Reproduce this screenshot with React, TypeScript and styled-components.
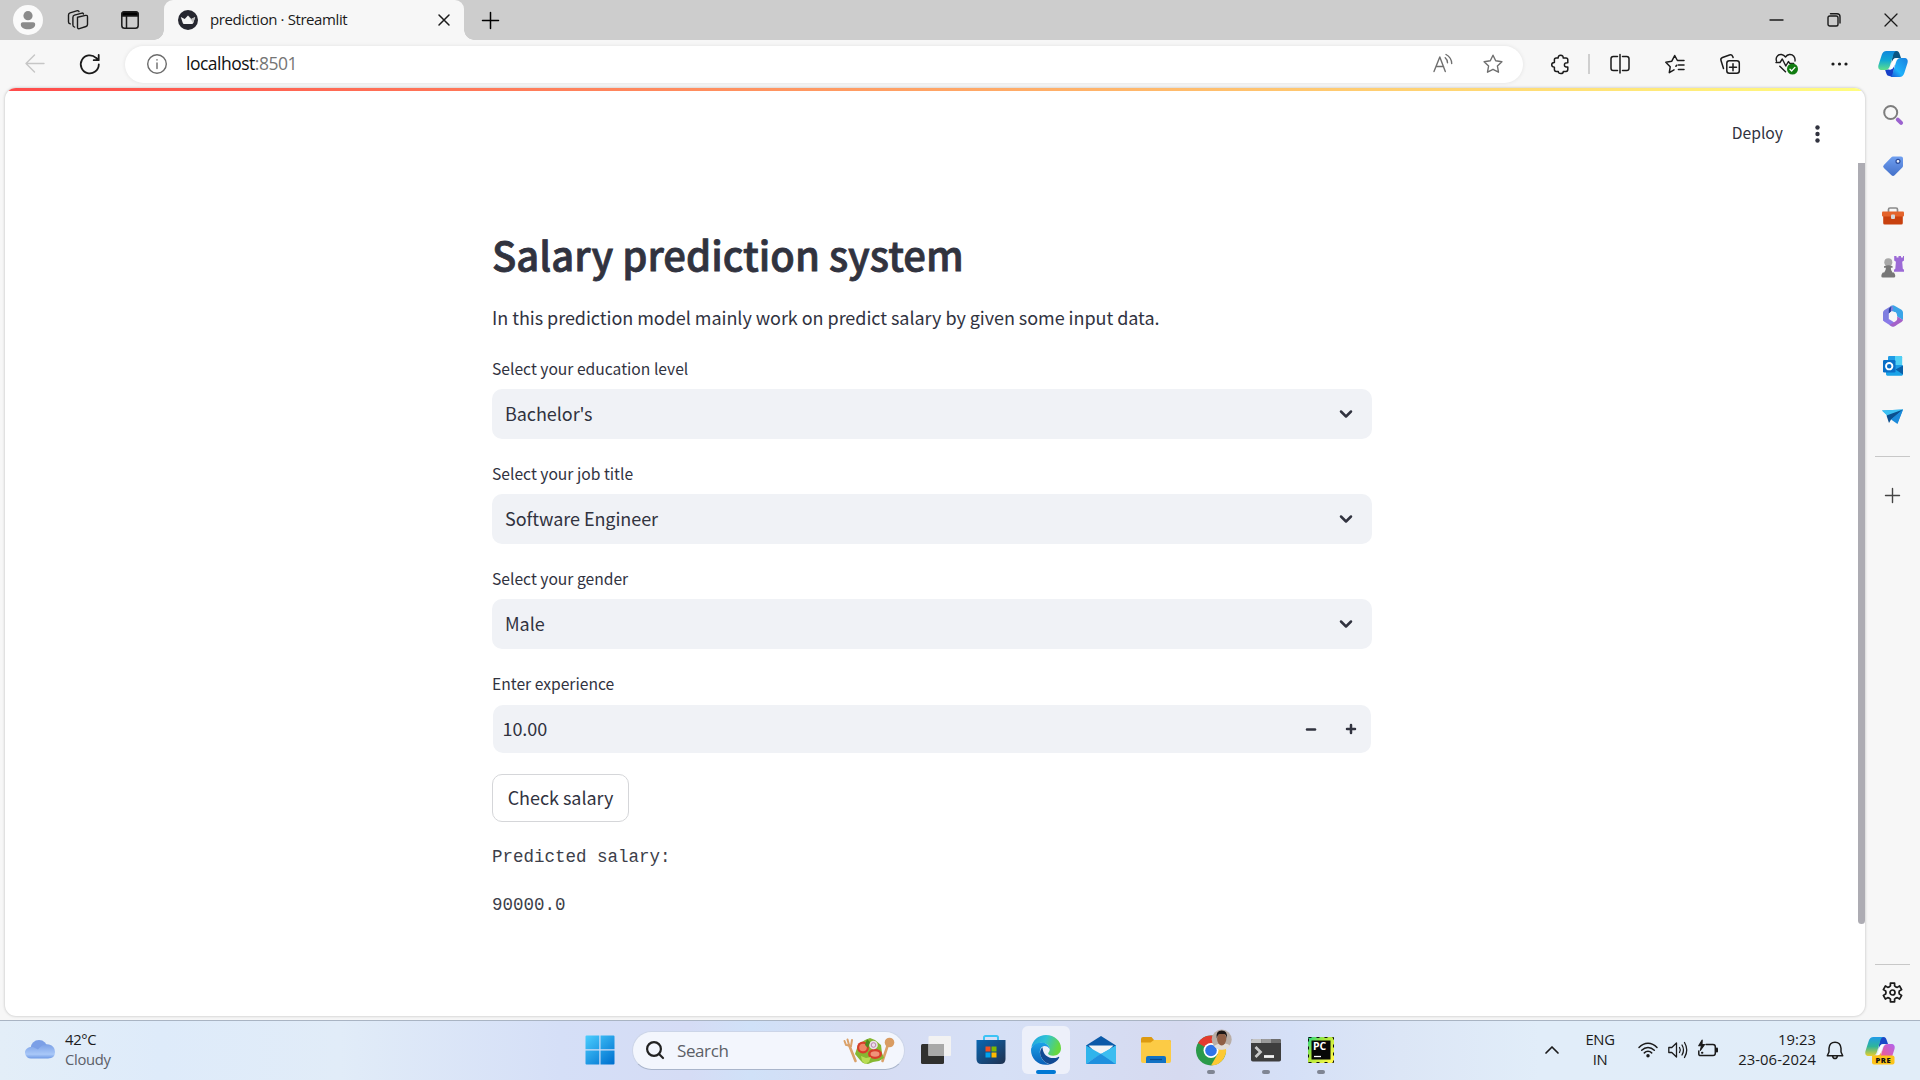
import React from "react";
import styled, { createGlobalStyle } from "styled-components";

const ui = `"Open Sans", "Noto Sans", sans-serif`;
const source = `"Noto Sans CJK SC", "Noto Sans", sans-serif`;

const Global = createGlobalStyle`
  * { box-sizing: border-box; }
  html, body { margin: 0; padding: 0; overflow: hidden; }
  svg { display: block; overflow: visible; flex: none; }
`;

const Screen = styled.div`
  width: 1920px;
  height: 1080px;
  display: flex;
  flex-direction: column;
  background: #f7f7f7;
  font-family: ${ui};
  overflow: hidden;
`;

/* ---------- tab strip ---------- */
const TabStrip = styled.header`
  height: 40px;
  flex: none;
  display: flex;
  background: #cdcdcd;
`;
const Slot = styled.div<{ $w: number; $h?: number; $end?: boolean }>`
  width: ${(p) => p.$w}px;
  height: ${(p) => (p.$h ? `${p.$h}px` : "100%")};
  flex: none;
  display: flex;
  align-items: center;
  justify-content: ${(p) => (p.$end ? "flex-end" : "center")};
`;
const WindowControls = styled.div`
  display: flex;
  padding: 0 1px 1px 0;
`;
const Tab = styled.div`
  width: 300px;
  height: 40px;
  margin-left: 3px;
  padding: 0 10px 0 14px;
  display: flex;
  align-items: center;
  background: #f7f7f7;
  border-radius: 9px 9px 0 0;
  position: relative;
  &::before,
  &::after {
    content: "";
    position: absolute;
    bottom: 0;
    width: 10px;
    height: 10px;
  }
  &::before {
    left: -10px;
    background: radial-gradient(circle at 0 0, transparent 9.5px, #f7f7f7 10px);
  }
  &::after {
    right: -10px;
    background: radial-gradient(circle at 100% 0, transparent 9.5px, #f7f7f7 10px);
  }
`;
const TabTitle = styled.span`
  margin-left: 12px;
  padding-bottom: 2px;
  flex: 1;
  font-size: 15px;
  line-height: 20px;
  letter-spacing: -0.41px;
  color: #1b1b1b;
  white-space: nowrap;
`;
const Spacer = styled.div`
  flex: 1;
`;

/* ---------- toolbar ---------- */
const Toolbar = styled.div`
  height: 48px;
  flex: none;
  display: flex;
  align-items: center;
  background: #f7f7f7;
`;
const AddressBar = styled.div`
  width: 1398px;
  height: 37px;
  margin: 0 10px 0 15px;
  padding: 0 3px 0 22px;
  display: flex;
  align-items: center;
  background: #fff;
  border-radius: 19px;
  box-shadow: 0 0 4px rgba(0, 0, 0, 0.09);
`;
const Address = styled.span`
  margin-left: 19px;
  padding-bottom: 2px;
  font-size: 17.5px;
  line-height: 24px;
  letter-spacing: -0.5px;
  color: #111;
`;
const Port = styled.span`
  color: #757575;
`;
const ToolDivider = styled.div`
  width: 2px;
  height: 20px;
  background: #cfcfcf;
`;

/* ---------- body ---------- */
const Body = styled.div`
  height: 932px;
  flex: none;
  display: flex;
`;
const Page = styled.main`
  width: 1860px;
  height: 928px;
  margin-left: 5px;
  flex: none;
  display: flex;
  flex-direction: column;
  background: #fff;
  border-radius: 11px;
  overflow: hidden;
  box-shadow: 0 0 3px rgba(0, 0, 0, 0.25);
`;
const Decoration = styled.div`
  height: 3px;
  flex: none;
  background: linear-gradient(90deg, #ff4b4b, #fffd80);
`;
const AppHeader = styled.div`
  height: 72px;
  flex: none;
  padding: 14px 45px 0 0;
  display: flex;
  justify-content: flex-end;
  align-items: center;
  gap: 32px;
`;
const Deploy = styled.span`
  font: 400 15.7px/24px ${source};
  color: #31333f;
  margin-top: -2px;
`;
const Scroller = styled.div`
  flex: 1;
  display: flex;
  justify-content: space-between;
`;
const ScrollThumb = styled.div`
  width: 7px;
  height: 761px;
  background: #adacb3;
  border-radius: 0 0 4px 4px;
`;
const Block = styled.section`
  width: 880px;
  margin-left: 487px;
  padding-top: 67px;
  color: #31333f;
  font-family: ${source};
`;
const Title = styled.h1`
  margin: 0;
  height: 48px;
  font-size: 40px;
  line-height: 48px;
  font-weight: 500;
  -webkit-text-stroke: 0.8px #31333f;
  white-space: nowrap;
`;
const Intro = styled.p`
  margin: 24px 0 0;
  height: 30px;
  font-size: 18px;
  line-height: 30px;
  letter-spacing: -0.045px;
  white-space: nowrap;
`;
const Field = styled.div<{ $top: number }>`
  margin-top: ${(p) => p.$top}px;
`;
const Label = styled.div`
  height: 20px;
  margin-bottom: 10px;
  font-size: 15.65px;
  line-height: 20px;
`;
const Select = styled.div`
  height: 50px;
  padding: 0 16px 0 13px;
  display: flex;
  align-items: center;
  justify-content: space-between;
  background: #f0f2f6;
  border-radius: 10px;
  font-size: 18px;
  letter-spacing: -0.06px;
`;
const Value = styled.span`
  padding-bottom: 2px;
`;
const NumberBox = styled(Select)`
  height: 48px;
  margin: 11px 1px 0;
  padding: 0 0 0 9.5px;
`;
const Steppers = styled.div`
  display: flex;
  height: 100%;
`;
const Button = styled.button`
  display: block;
  width: 137px;
  height: 48px;
  margin: 21px 0 0;
  padding: 0 0 3px;
  border: 1px solid #d5d6d9;
  border-radius: 10px;
  background: #fff;
  color: #31333f;
  font: 400 18px/30px ${source};
  letter-spacing: -0.045px;
`;
const Output = styled.div<{ $top: number }>`
  height: 28px;
  margin-top: ${(p) => p.$top}px;
  font: 400 17.5px/28px "Liberation Mono", monospace;
  color: #3c3e49;
  white-space: pre;
`;

/* ---------- sidebar ---------- */
const Sidebar = styled.aside`
  width: 55px;
  height: 932px;
  padding-top: 3px;
  display: flex;
  flex-direction: column;
  align-items: center;
`;
const SideDivider = styled.div`
  width: 35px;
  height: 1px;
  background: #c8c8c8;
`;

/* ---------- taskbar ---------- */
const Taskbar = styled.footer`
  height: 60px;
  flex: none;
  padding-bottom: 1px;
  display: flex;
  align-items: center;
  border-top: 1px solid #a9b4c3;
  background: linear-gradient(90deg, #e3eef8 0, #deebfa 160px, #e1ecf8 340px, #d5dff7 560px, #d5dcf5 690px, #d0e1f8 750px, #d6dcf3 860px, #d6e0f6 1000px, #d6daf0 1180px, #d5e0f7 1290px, #dce6f6 1400px, #e1edf9 1540px, #e1edf8 1920px);
  color: #1b1b1b;
`;
const Weather = styled.div`
  width: 572px;
  padding-left: 25px;
  display: flex;
  align-items: center;
  gap: 10px;
`;
const Lines = styled.div<{ $align?: string; $ls?: number }>`
  padding-bottom: 3px;
  font-size: 14.8px;
  line-height: 20px;
  letter-spacing: ${(p) => p.$ls ?? -0.3}px;
  text-align: ${(p) => p.$align ?? "left"};
  white-space: nowrap;
`;
const Muted = styled.div`
  color: #5b6068;
`;
const Search = styled.div`
  width: 273px;
  height: 39px;
  margin: 0 3px 0 5px;
  padding: 0 9px 0 13px;
  display: flex;
  align-items: center;
  border-radius: 20px;
  border: 1px solid #ccd5e8;
  border-bottom-color: #a9b5cb;
  background: #f3f6fd;
`;
const SearchText = styled.span`
  flex: 1;
  margin-left: 13px;
  font-size: 17px;
  letter-spacing: -0.4px;
  color: #5c5f66;
`;
const AppTile = styled.div<{ $active?: boolean }>`
  width: 48px;
  height: 48px;
  display: grid;
  place-items: center;
  border-radius: 6px;
  position: relative;
  background: ${(p) => (p.$active ? "#edf0fa" : "transparent")};
`;
const Indicator = styled.div<{ $active?: boolean }>`
  position: absolute;
  left: 50%;
  bottom: 0;
  transform: translateX(-50%);
  width: ${(p) => (p.$active ? 20 : 8)}px;
  height: 4px;
  border-radius: 2px;
  background: ${(p) => (p.$active ? "#0078d4" : "#7f8593")};
`;

/* ---------- icons ---------- */
type LineProps = { w: number; h?: number; color?: string; sw?: number; children: React.ReactNode };
const Line = ({ w, h, color = "#1b1b1b", sw = 1.4, children }: LineProps) => (
  <svg width={w} height={h ?? w} viewBox={`0 0 ${w} ${h ?? w}`} fill="none" stroke={color} strokeWidth={sw} strokeLinecap="round" strokeLinejoin="round">
    {children}
  </svg>
);

const Avatar = () => (
  <svg width="30" height="30" viewBox="0 0 30 30">
    <circle cx="15" cy="15" r="15" fill="#fafafa" />
    <circle cx="15" cy="10.7" r="4.6" fill="#8b8b8b" />
    <path d="M7.8 19.2c0-1.2.9-2 2-2h10.4c1.1 0 2 .8 2 2 0 3.3-3 5-7.2 5s-7.2-1.7-7.2-5z" fill="#8b8b8b" />
  </svg>
);
const Workspaces = () => (
  <Line w={22} sw={1.4}>
    <path d="M10.500 8.300 18.600 6.400q1.900-.4 1.900 1.500v7.600q0 1.500-1.500 2l-6.600 2.100q-1.900.5-1.900-1.400v-7.900q0-1.600 0-2z" />
    <path d="M7.600 18.100q-1.700-.3-1.700-2V8.400q0-1.700 1.600-2.200l7.400-2.100q1.300-.3 1.600.9" />
    <path d="M3.300 14.900q-1.800-.4-1.800-2V6.100q0-1.700 1.600-2.200L10.400 1.700q1.300-.3 1.600.9" />
  </Line>
);
const TabActions = () => (
  <Line w={18} sw={1.5}>
    <rect x=".8" y=".8" width="16.4" height="16.4" rx="2.8" />
    <path d="M1 5V3a2 2 0 0 1 2-2h12a2 2 0 0 1 2 2v2z" fill="#000" />
    <path d="M5.500 5v12" />
  </Line>
);
const Crown = () => (
  <svg width="20" height="20" viewBox="0 0 20 20">
    <circle cx="10" cy="10" r="10" fill="#262730" />
    <path d="M2.800 6.900 6.700 9 10 5.400 13.300 9l3.900-2.100-2 6.200q-.3.900-1.200.9H6q-.9 0-1.200-.9z" fill="#f5f5f5" />
    <path d="M10 5.400 13.300 9l3.900-2.100-2 6.200z" fill="#bdbdbd" />
  </svg>
);
const Cross = ({ s, sw }: { s: number; sw: number }) => (
  <Line w={s} sw={sw}><path d={`M1 1 ${s - 1} ${s - 1}M${s - 1} 1 1 ${s - 1}`} /></Line>
);
const Plus = ({ s, sw, color }: { s: number; sw: number; color?: string }) => (
  <Line w={s} sw={sw} color={color}><path d={`M${s / 2} .5V${s - 0.5}M.5 ${s / 2}H${s - 0.5}`} /></Line>
);
const ReadAloud = () => (
  <Line w={20} color="#6f6f6f">
    <path d="M1 17.500 6.800 3 12.300 17.500M3 12.500h7.600" />
    <path d="M12.200 3.700q2.200 1.800 2.300 5M13 .5q5.500 3 5.700 9" />
  </Line>
);
const starPath = "M10 1.2 12.7 6.8 18.9 7.7 14.4 12 15.5 18.2 10 15.3 4.5 18.2 5.6 12 1.1 7.7 7.3 6.8z";
const Puzzle = () => (
  <Line w={20} sw={1.5}>
    <path d="M7.200 4q-.2-2.800 2.500-2.800T12.200 4H15q1.800 0 1.800 1.800v2.900q-3.400-.2-3.400 2.200t3.400 2.200v2.500q0 1.800-1.800 1.800h-2.700q0 2.100-2.500 2.100T7.300 17.400H5.100q-1.700 0-1.700-1.800v-2.400Q.7 13 .7 10.800t2.700-2.300V5.800Q3.400 4 5.100 4z" />
  </Line>
);
const Split = () => (
  <Line w={20} sw={1.5}>
    <path d="M7.500 2.500H3.300Q1 2.500 1 4.800v9.400q0 2.300 2.300 2.300h4.200M12.500 2.500h4.200Q19 2.500 19 4.800v9.400q0 2.300-2.300 2.300h-4.200M10 .5v18.500" />
  </Line>
);
const Favorites = () => (
  <Line w={20} sw={1.5}>
    <path d="M9 15.900 4.300 18.700 5.200 12.800.8 8.200 6.800 7.200 9.700 1.500 12.400 6.500H19M13.400 11H19M13.400 15.500H19M11.700 11.200 10.900 12.300" />
  </Line>
);
const Collections = () => (
  <Line w={20} sw={1.5}>
    <rect x="6.800" y="6.800" width="12.500" height="12.500" rx="2.500" />
    <path d="M13 9.700v7M9.500 13.200h7M3.500 14.500 1 6.600Q.3 4.300 2.500 3.500L9.500 1q2.300-.7 3.200 1.500l.4 1.100" />
  </Line>
);
const Essentials = () => (
  <Line w={22} sw={1.4}>
    <path d="M1.500 8Q.5 5 2.400 3 4 1.200 6.500 1.500 9 2 10.500 4 12 1.700 14.500 1.500q2.700-.2 4.300 1.700T20 8M4.800 13.200l5.700 5.600M1 9.500h4L7.300 6l3.500 7 2.600-4.500 1.300 1.900h4" />
    <circle cx="17.500" cy="16" r="5.500" fill="#107c10" stroke="none" />
    <path d="m15 16.200 1.700 1.700 3.200-3.500" stroke="#fff" />
  </Line>
);
const Dots = () => (
  <svg width="17" height="4"><g fill="#1b1b1b"><circle cx="2" cy="2" r="1.6" /><circle cx="8.5" cy="2" r="1.6" /><circle cx="15" cy="2" r="1.6" /></g></svg>
);
const Copilot = ({ pre }: { pre?: boolean }) => (
  <svg width="30" height="28" viewBox="0 0 30 28">
    <defs>
      <linearGradient id={pre ? "cpA" : "caA"} x1="0" y1="0" x2="0" y2="1">
        <stop offset="0" stopColor={pre ? "#1f9be8" : "#1087dc"} />
        <stop offset=".5" stopColor={pre ? "#2fb59a" : "#12a9d3"} />
        <stop offset="1" stopColor={pre ? "#e9cf2c" : "#5fe08a"} />
      </linearGradient>
      <linearGradient id={pre ? "cpB" : "caB"} x1="1" y1="0" x2="0" y2="1">
        <stop offset="0" stopColor={pre ? "#b065f0" : "#1a80dd"} />
        <stop offset=".6" stopColor={pre ? "#ea5a9b" : "#1fb2fb"} />
        <stop offset="1" stopColor={pre ? "#ff8a50" : "#1648cf"} />
      </linearGradient>
    </defs>
    <path d="M15 1h3.500c2 0 2.700 1.500 3.500 4l1 3h-4.500c-3 0-4 2-5 5z" fill={pre ? "#1b49c7" : "#0a5583"} />
    <path d="M15 26h-3.500c-2 0-2.800-1-3.500-3.500L7 19.500h4c3.500 0 4.500-2 5.500-5z" fill={pre ? "#f7a13e" : "#1640c8"} />
    <path d="M8.500 1H19c-2 0-3 1.500-3.800 4l-3 10c-1 3.500-2.200 5-5 5H4C.8 20-.3 18 .5 15L3.700 5C4.600 2.300 6 1 8.500 1z" fill={`url(#${pre ? "cpA" : "caA"})`} />
    <path d="M21.500 27H11c2 0 3-1.500 3.800-4l3-10c1-3.500 2.200-5 5-5H26c3.200 0 4.300 2 3.500 5l-3.200 10c-.9 2.700-2.300 4-4.800 4z" fill={`url(#${pre ? "cpB" : "caB"})`} />
    <path d="M17 8.500h3c-1.700.7-2.300 2-3 4.500l-1 3c-.9 2.500-2 3.500-4 3.500h-1c1.200-.8 1.800-2 2.500-4.500l1-3c.5-2 1-3 2.500-3.500z" fill="#fff" />
    {pre && (
      <g>
        <rect x="7" y="19.5" width="22.5" height="9" rx="2" fill="#fcc419" />
        <text x="18.3" y="26.9" textAnchor="middle" fontFamily="Open Sans" fontWeight="800" fontSize="7.6" letterSpacing=".5" fill="#111">PRE</text>
      </g>
    )}
  </svg>
);
const SideSearch = () => (
  <svg width="20" height="22" viewBox="0 0 20 22" fill="none">
    <circle cx="7.700" cy="7.500" r="6.500" stroke="#7d7d7d" strokeWidth="2" />
    <path d="m14.800 14.600 3.300 3.300" stroke="#9b62cf" strokeWidth="4" strokeLinecap="round" />
  </svg>
);
const Tag = () => (
  <svg width="20" height="20" viewBox="0 0 20 20">
    <defs><linearGradient id="tag" x1="0" y1="0" x2="0" y2="1"><stop offset="0" stopColor="#6f9ff0" /><stop offset="1" stopColor="#4470c9" /></linearGradient></defs>
    <path d="M10 .5h8q2 0 2 2v7.300q0 1-.7 1.700l-7.700 7.700q-1.600 1.500-3.100 0L.9 12q-1.600-1.600 0-3.100L8.400 1.200Q9 .5 10 .5z" fill="url(#tag)" />
    <circle cx="15" cy="5.300" r="2" fill="#e9effc" stroke="#2b4b9a" strokeWidth="1.200" />
  </svg>
);
const Toolbox = () => (
  <svg width="22" height="18" viewBox="0 0 22 18">
    <path d="M6.500 5V2.500q0-1.500 1.500-1.500h6q1.500 0 1.500 1.500V5" fill="none" stroke="#8a8a8a" strokeWidth="1.700" />
    <rect x="1.200" y="8" width="19.600" height="9.500" rx="1.500" fill="#c8410f" />
    <rect x="0" y="4.500" width="22" height="5" rx="1" fill="#e4642c" />
    <rect x="9" y="7.500" width="4" height="4.500" rx="1" fill="#d5d8da" />
  </svg>
);
const Chess = () => (
  <svg width="23" height="23" viewBox="0 0 23 23">
    <path d="M13.500 1h2v1.500h2V1h2.500v1.500H22V1h1v4.500l-1.800 1.300.6 7 1.200 1v2H13v-2l1.300-1 .6-7-1.700-1.300V1z" fill="#9c6ad6" />
    <circle cx="7.300" cy="7.200" r="4" fill="#a8a8a8" />
    <path d="M3 11.300q4.300-2.300 8.600 0v1.400H9.800q0 3 1.700 4.800h1.500q1.300 2 1.300 3.500 0 1.500-1.500 1.500H1.900Q.3 22.500.3 21q0-1.700 1.500-3.500h1.400q1.700-1.800 1.700-4.800H3z" fill="#777" />
  </svg>
);
const M365 = () => (
  <svg width="20" height="22" viewBox="0 0 20 22">
    <path d="M10 .3Q11 .3 12 1l6.500 3.800Q20 5.700 20 7.500V15l-5.500-3.300L13 7.500 8.500 6 6 7 7.500 1z" fill="#3aa5e8" />
    <path d="M8.500.7 1.500 5Q0 6 0 7.500V15.500q4 2 5.800-.5V9q0-1 1-1.700L10 5.300Q11 2 8.500.7z" fill="#7f7fe0" />
    <path d="M9.800.4Q8 1 8 3.500L7.800 6.800 5.800 8.500V5q0-1.500 1-2.300z" fill="#2b3f96" />
    <path d="M0 14q0 1.900 1.500 2.800l7 4.400q1.500.8 3 0L14 19.700 9.500 16.200 5.800 14Q3 17 0 14z" fill="#8b7be8" />
    <path d="M14.200 11.500 20 15q-.2 1.200-1.500 2l-7 4.200q-1.500.8-3 0L6.500 20l6.500-4q1.200-.8 1.200-2z" fill="#a561c8" />
    <circle cx="10" cy="10.700" r="3.900" fill="#f7f7f7" />
  </svg>
);
const Outlook = () => (
  <svg width="20" height="20" viewBox="0 0 20 20">
    <rect x="5" y="0" width="14" height="17" rx="1.200" fill="#1f9ce6" />
    <path d="M12 0h6q1.200 0 1.200 1.200V9H12z" fill="#50d0f5" />
    <path d="M3 9.500 12 14l8-5v9.300q0 1.400-1.400 1.400H4.400Q3 19.700 3 18.300z" fill="#1aa3e8" />
    <path d="M20 9.500v9l-7.500-5z" fill="#0a5fa8" />
    <rect x="0" y="4" width="12.500" height="12.500" rx="1.300" fill="#0a6fc7" />
    <circle cx="6.200" cy="10.200" r="3.200" fill="none" stroke="#fff" strokeWidth="1.900" />
  </svg>
);
const Plane = () => (
  <svg width="21" height="15" viewBox="0 0 21 15">
    <path d="M0 1.500 21 .5 15.500 14 9.500 10z" fill="#1a9be6" />
    <path d="M0 1.500 21 .5 7 8.500z" fill="#3cc0f2" />
    <path d="M4.500 6.500 21 .5 9 10.500 7 14z" fill="#0b4f8f" />
    <path d="M9 10.500 21 .5 15.500 15z" fill="#1c8ada" />
  </svg>
);
const gearPath = (() => {
  const pts: string[] = [];
  for (let i = 0; i < 6; i++) {
    const base = (i * Math.PI) / 3 - Math.PI / 2;
    [[-0.3, 7], [-0.22, 9.6], [0.22, 9.6], [0.3, 7], [0.523, 6.5]].forEach(([a, r]) => {
      pts.push(`${(10.5 + r * Math.cos(base + a)).toFixed(2)} ${(10.5 + r * Math.sin(base + a)).toFixed(2)}`);
    });
  }
  return `M${pts.join("L")}z`;
})();
const Gear = () => (
  <Line w={21} sw={1.7}><path d={gearPath} /><circle cx="10.500" cy="10.500" r="2.500" /></Line>
);
const Chevron = () => (
  <Line w={20} color="#31333f" sw={2.5}><path d="m5 7.500 5 5 5-5" /></Line>
);

const Cloud = () => (
  <svg width="30" height="20" viewBox="0 0 30 20">
    <defs><linearGradient id="cloud" x1="0" y1="0" x2="0" y2="1"><stop offset="0" stopColor="#7ba0e6" /><stop offset=".7" stopColor="#a9c8f8" /><stop offset="1" stopColor="#6d98e4" /></linearGradient></defs>
    <circle cx="14" cy="8.500" r="8.500" fill="#7b9fe6" />
    <path d="M7 18.500a6 6 0 0 1-7-6c0-4 4-6 8-5.500l5 2.500Q18 3 24 4.500q6 1.500 6 7.500 0 6.500-7 6.500z" fill="url(#cloud)" />
  </svg>
);
const Start = () => (
  <svg width="30" height="30" viewBox="0 0 30 30">
    <defs><linearGradient id="win" gradientUnits="userSpaceOnUse" x1="0" y1="0" x2="26" y2="30"><stop offset="0" stopColor="#4ccfff" /><stop offset="1" stopColor="#0072d0" /></linearGradient></defs>
    <path d="M1.500.5H14.300V14.300H.5V1.500q0-1 1-1zM15.500.5H28.500q1 0 1 1V14.300H15.500zM.5 15.500H14.300V29.500H1.500q-1 0-1-1zM15.500 15.500H29.500v13q0 1-1 1H15.500z" fill="url(#win)" />
  </svg>
);
const Salad = () => (
  <svg width="52" height="27" viewBox="0 0 52 27">
    <g stroke="#dba169" strokeLinecap="round" fill="none">
      <path d="m6.500 9 6 15" strokeWidth="2.600" />
      <path d="m44.500 9-5 15" strokeWidth="2.600" />
      <path d="m1.500 4 1.500 4 5 1 1-6M4.500 2.500 6 8" strokeWidth="2" />
    </g>
    <circle cx="46.500" cy="5.500" r="4.800" fill="#d99c62" />
    <path d="m12 17 3-9 7-5 5-2 5 2 6 5 1 8 2 5-5 3-6 1-5 2-5-1-3-3z" fill="#86b832" />
    <circle cx="20" cy="10.500" r="6" fill="#d63e2a" />
    <circle cx="20" cy="10.500" r="3.800" fill="#ee8464" />
    <ellipse cx="32" cy="17" rx="7" ry="5" fill="#d63e2a" />
    <ellipse cx="32" cy="17" rx="4.500" ry="2.800" fill="#f0937a" />
    <circle cx="30.500" cy="8" r="4.300" fill="#ecdfe9" />
    <circle cx="30.500" cy="8" r="2.300" fill="none" stroke="#b884ad" />
    <path d="m18 19 5 2 5-1-2 5-4 2-3-3z" fill="#b8dd54" />
    <path d="m24 2 3 3-2 6-3-3z" fill="#4f8a1e" />
  </svg>
);
const TaskView = () => (
  <svg width="30" height="28" viewBox="0 0 30 28">
    <rect x="0" y="8" width="23" height="20" rx="1.500" fill="#30302e" />
    <rect x="7.500" y="0" width="22.500" height="20" rx="1" fill="#f2f2f2" />
    <path d="M7.500 8H23v12H7.500z" fill="#a9a9a8" />
  </svg>
);
const Store = () => (
  <svg width="30" height="30" viewBox="0 0 30 30">
    <defs><linearGradient id="store" x1="0" y1="0" x2="1" y2="1"><stop offset="0" stopColor="#0a67b3" /><stop offset="1" stopColor="#20314f" /></linearGradient></defs>
    <path d="M8 6V2.500Q8 1 9.500 1h11Q22 1 22 2.500V6" fill="none" stroke="#3cc3f5" strokeWidth="2" />
    <path d="M.5 5h29v19q0 5-5 5h-19q-5 0-5-5z" fill="url(#store)" />
    <path d="M9.500 11.500h5v5h-5z" fill="#f25022" /><path d="M15.500 11.500h5v5h-5z" fill="#7fba00" />
    <path d="M9.500 17.500h5v5h-5z" fill="#00a4ef" /><path d="M15.500 17.500h5v5h-5z" fill="#ffb900" />
  </svg>
);
const Edge = () => (
  <svg width="30" height="30" viewBox="0 0 24 24">
    <defs>
      <linearGradient id="edgeTop" x1="0" y1="0" x2="1" y2=".3"><stop offset="0" stopColor="#1f9fdf" /><stop offset=".5" stopColor="#2fc3d6" /><stop offset="1" stopColor="#66d840" /></linearGradient>
      <linearGradient id="edgeLeft" x1="0" y1="0" x2="0" y2="1"><stop offset="0" stopColor="#1ba2e8" /><stop offset="1" stopColor="#0a5fb8" /></linearGradient>
    </defs>
    <path d="M.3 9.800C1.200 4.200 6 0 12 0c6.800 0 12 4.800 12 10.500 0 3.800-3 6-6.300 6-2.800 0-4-1-4-1.800 0-.7 1.300-1.300 1.300-3.200C15 8 10.500 5.500 6.500 6.500 3.500 7.200 1.300 8.500.3 9.800z" fill="url(#edgeTop)" />
    <path d="M0 12C0 9 3.500 6 8 6c4.200 0 7 2.800 7 5.500 0 0-1.200-2.700-4-2.700-3 0-4.500 3-3.700 6.500.9 4 4 7.300 8.200 8.200C6.500 25.500 0 19.500 0 12z" fill="url(#edgeLeft)" />
    <path d="M9.200 9.800c-1.800 1.500-2.700 4.500-1 8C10 21.500 13 23 15.500 23.400c3-.8 5.800-2.900 7-5.300.3-.6-.2-.8-.6-.6-5 2.400-12.400.4-12.700-7.700z" fill="#114a93" />
  </svg>
);
const Mail = () => (
  <svg width="30" height="28" viewBox="0 0 30 28">
    <path d="M0 9.500 15 0l15 9.500v4H0z" fill="#0b5aa8" />
    <path d="M2.500 9.500h25L15 22z" fill="#f2f4f6" />
    <path d="M0 9.500 15 18 0 28z" fill="#2fb4ec" /><path d="M30 9.500 15 18 30 28z" fill="#29a9ea" />
    <path d="M0 28 15 17.500 30 28z" fill="#1f90de" />
    <path d="m15 18 15-8.500V28z" fill="#3cbdf0" />
  </svg>
);
const Folder = () => (
  <svg width="30" height="28" viewBox="0 0 30 28">
    <path d="M0 3Q0 1 2 1h8.500l2.500 3h15q2 0 2 2v8H0z" fill="#dd9a10" />
    <path d="M0 6.500h9.500L13 4h15q2 0 2 2v19q0 2-2 2H2q-2 0-2-2z" fill="#fccb45" />
    <path d="M5 27v-5q0-2 2-2h16q2 0 2 2v5z" fill="#1272c4" />
    <path d="M9 23.500h12" stroke="#0a4b8c" strokeWidth="1.200" />
  </svg>
);
const Chrome = () => (
  <svg width="36" height="36" viewBox="0 0 36 36">
    <circle cx="18" cy="18.500" r="15" fill="#2a9a4a" />
    <path d="M18 18.500 5 11A15 15 0 0 1 31 11H18z" fill="#e33b2e" />
    <path d="M18 11H31A15 15 0 0 1 18 33.500l6.500-11.200z" fill="#fcc934" />
    <circle cx="18" cy="18.500" r="7.500" fill="#fff" />
    <circle cx="18" cy="18.500" r="5.800" fill="#2f74e8" />
    <circle cx="28.700" cy="7.500" r="10" fill="#b9aea6" />
    <path d="M21 14q3-2 5-2.500h6q3.500.5 5 2.200A10 10 0 0 1 21 14z" fill="#e1ddd9" />
    <ellipse cx="28.700" cy="7" rx="4.600" ry="6.500" fill="#8f5f45" />
    <path d="M23.700 6.500Q22.500-1.500 28.700-1.500t5.200 8q-.7-4-2.500-4.500h-5Q24.500 2.500 23.700 6.500z" fill="#1d1715" />
  </svg>
);
const Terminal = () => (
  <svg width="30" height="23" viewBox="0 0 30 23">
    <rect width="30" height="22.500" rx="1.800" fill="#3e3e3e" />
    <path d="M2 0h8.500v4H0V2q0-2 2-2z" fill="#c4c4c4" /><path d="M10.500 0H20v4h-9.500z" fill="#9a9a9a" /><path d="M20 0h8q2 0 2 2v2H20z" fill="#6d6d6d" />
    <path d="m4.500 8 5 5-5 5" fill="none" stroke="#c9c9c9" strokeWidth="2.700" />
    <path d="M13 17.500h10" stroke="#f2f2f2" strokeWidth="2.800" />
  </svg>
);
const PyCharm = () => (
  <svg width="26" height="26" viewBox="0 0 26 26">
    <defs><linearGradient id="pyc" x1="0" y1="0" x2="1" y2=".8"><stop offset="0" stopColor="#21d789" /><stop offset=".4" stopColor="#a4e63a" /><stop offset="1" stopColor="#fcf84a" /></linearGradient></defs>
    <rect width="26" height="26" fill="url(#pyc)" />
    <rect x=".5" y=".5" width="25" height="25" fill="none" stroke="#111" strokeDasharray="3 5" />
    <rect x="3.500" y="3.500" width="19" height="19" fill="#070707" />
    <text x="5" y="13.200" fontFamily="Open Sans" fontWeight="700" fontSize="10.500" fill="#fff">PC</text>
    <path d="M6 19.500h7" stroke="#fff" strokeWidth="1.300" />
  </svg>
);
const Magnifier = () => (
  <Line w={18} sw={2.2} color="#222"><circle cx="8" cy="8" r="6.900" /><path d="m13 13 4 4" /></Line>
);
const Wifi = () => (
  <Line w={20} sw={1.5}>
    <path d="M1 7.500Q5 3.200 10 3.200t9 4.300M3.700 10.200Q6.500 7.400 10 7.400t6.300 2.800M6.300 12.900q1.600-1.600 3.700-1.600t3.700 1.600" />
    <circle cx="10" cy="15.800" r="1" fill="#1b1b1b" />
  </Line>
);
const Sound = () => (
  <Line w={20} sw={1.3}>
    <path d="M.8 7.500h3L8.500 3v14l-4.700-4.500h-3zM11.500 7.500q1.600 2.500 0 5M14 5q3 5 0 10M16.500 2.500q4.500 7.500 0 15" />
  </Line>
);
const Battery = () => (
  <Line w={20} sw={1.5}>
    <path d="M8 4.500h7q2.300 0 2.300 2.300v6.500q0 2.300-2.300 2.300H2.500Q.8 15.600.8 14v-3" />
    <path d="M18.900 8.500v3" strokeWidth="2.200" />
    <path d="M4.200 0 .7 5.800h2.800L2.300 10.500 6.500 4.600H4z" fill="#1b1b1b" strokeWidth="1.100" />
    <path d="M4 12.800h.4" strokeWidth="2" />
  </Line>
);
const Bell = () => (
  <Line w={18} sw={1.5}>
    <path d="M1.300 14.700 3 11V7.200Q3.500 1.200 9 1.200t6 6V11l1.700 3.700zM6.500 15q.5 2.500 2.500 2.500t2.500-2.500" />
  </Line>
);

const fields = [
  { label: "Select your education level", value: "Bachelor's", top: 27 },
  { label: "Select your job title", value: "Software Engineer", top: 25 },
  { label: "Select your gender", value: "Male", top: 25 },
];
const sideApps = [SideSearch, Tag, Toolbox, Chess, M365, Outlook, Plane];
const taskApps = [
  { Icon: TaskView }, { Icon: Store }, { Icon: Edge, active: true }, { Icon: Mail }, { Icon: Folder },
  { Icon: Chrome, open: true }, { Icon: Terminal, open: true }, { Icon: PyCharm, open: true },
] as { Icon: React.FC; active?: boolean; open?: boolean }[];

export default function App() {
  return (
    <Screen>
      <Global />
      <TabStrip>
        <Slot $w={56}><Avatar /></Slot>
        <Slot $w={43}><Workspaces /></Slot>
        <Slot $w={62}><TabActions /></Slot>
        <Tab>
          <Crown />
          <TabTitle>prediction · Streamlit</TabTitle>
          <Slot $w={20}><Cross s={12} sw={1.5} /></Slot>
        </Tab>
        <Slot $w={53}><Plus s={17} sw={1.5} color="#000" /></Slot>
        <Spacer />
        <WindowControls>
          <Slot $w={57}><Line w={13} h={2}><path d="M0 1h13" /></Line></Slot>
          <Slot $w={57}>
            <Line w={14} sw={1.4}><rect x="1" y="3" width="10" height="10" rx="1.800" /><path d="M3.500.8h6.500q3 0 3 3V10" /></Line>
          </Slot>
          <Slot $w={57}><Cross s={14} sw={1.3} /></Slot>
        </WindowControls>
      </TabStrip>

      <Toolbar>
        <Slot $w={70}><Line w={20} color="#c6c6c6"><path d="M19 9.500H1M9.500 1 1 9.500 9.500 18" /></Line></Slot>
        <Slot $w={40}>
          <Line w={20} sw={1.8}><path d="M18.800 10.500A9 9 0 1 1 16 3.800L18.500 6M18.700 1v5.200h-5" /></Line>
        </Slot>
        <AddressBar>
          <Line w={20} color="#6b6b6b"><circle cx="10" cy="10" r="9.300" /><path d="M10 9v5.500M10 5.800v.3" /></Line>
          <Address>localhost<Port>:8501</Port></Address>
          <Spacer />
          <Slot $w={44}><ReadAloud /></Slot>
          <Slot $w={55}><Line w={20} color="#6f6f6f"><path d={starPath} /></Line></Slot>
        </AddressBar>
        <Slot $w={55}><Puzzle /></Slot>
        <ToolDivider />
        <Slot $w={59}><Split /></Slot>
        <Slot $w={52}><Favorites /></Slot>
        <Slot $w={58}><Collections /></Slot>
        <Slot $w={53}><Essentials /></Slot>
        <Slot $w={55}><Dots /></Slot>
        <Slot $w={51}><Copilot /></Slot>
      </Toolbar>

      <Body>
        <Page>
          <Decoration />
          <AppHeader>
            <Deploy>Deploy</Deploy>
            <svg width="5" height="18" fill="#31333f"><circle cx="2.500" cy="2.500" r="2.200" /><circle cx="2.500" cy="9" r="2.200" /><circle cx="2.500" cy="15.500" r="2.200" /></svg>
          </AppHeader>
          <Scroller>
            <Block>
              <Title>Salary prediction system</Title>
              <Intro>In this prediction model mainly work on predict salary by given some input data.</Intro>
              {fields.map((f) => (
                <Field key={f.label} $top={f.top}>
                  <Label>{f.label}</Label>
                  <Select><Value>{f.value}</Value><Chevron /></Select>
                </Field>
              ))}
              <Field $top={25}>
                <Label>Enter experience</Label>
                <NumberBox>
                  <Value>10.00</Value>
                  <Steppers>
                    <Slot $w={40}><Line w={10} h={3} color="#31333f" sw={2.5}><path d="M1 1.500h8" /></Line></Slot>
                    <Slot $w={40}><Line w={10} color="#31333f" sw={2.5}><path d="M1 5h8M5 1v8" /></Line></Slot>
                  </Steppers>
                </NumberBox>
              </Field>
              <Button>Check salary</Button>
              <Output $top={21}>Predicted salary:</Output>
              <Output $top={20}>90000.0</Output>
            </Block>
            <ScrollThumb />
          </Scroller>
        </Page>
        <Sidebar>
          {sideApps.map((Icon, i) => (
            <Slot key={i} $w={55} $h={50}><Icon /></Slot>
          ))}
          <Slot $w={55} $h={31}><SideDivider /></Slot>
          <Slot $w={55} $h={47}><Plus s={15} sw={1.4} color="#444" /></Slot>
          <Spacer />
          <SideDivider />
          <Slot $w={55} $h={55}><Gear /></Slot>
        </Sidebar>
      </Body>

      <Taskbar>
        <Weather>
          <Cloud />
          <Lines><div>42°C</div><Muted>Cloudy</Muted></Lines>
        </Weather>
        <Slot $w={55}><Start /></Slot>
        <Search><Magnifier /><SearchText>Search</SearchText><Salad /></Search>
        {taskApps.map(({ Icon, active, open }, i) => (
          <Slot key={i} $w={55}>
            <AppTile $active={active}>
              <Icon />
              {(active || open) && <Indicator $active={active} />}
            </AppTile>
          </Slot>
        ))}
        <Spacer />
        <Slot $w={28}><Line w={14} h={8} sw={1.7}><path d="m1 7 6-6 6 6" /></Line></Slot>
        <Slot $w={68}><Lines $align="center"><div>ENG</div><div>IN</div></Lines></Slot>
        <Slot $w={28}><Wifi /></Slot>
        <Slot $w={31}><Sound /></Slot>
        <Slot $w={29}><Battery /></Slot>
        <Slot $w={94} $end>
          <Lines $align="right" $ls={0.05}><div>19:23</div><div>23-06-2024</div></Lines>
        </Slot>
        <Slot $w={38}><Bell /></Slot>
        <Slot $w={52}><Copilot pre /></Slot>
        <Slot $w={14} />
      </Taskbar>
    </Screen>
  );
}
